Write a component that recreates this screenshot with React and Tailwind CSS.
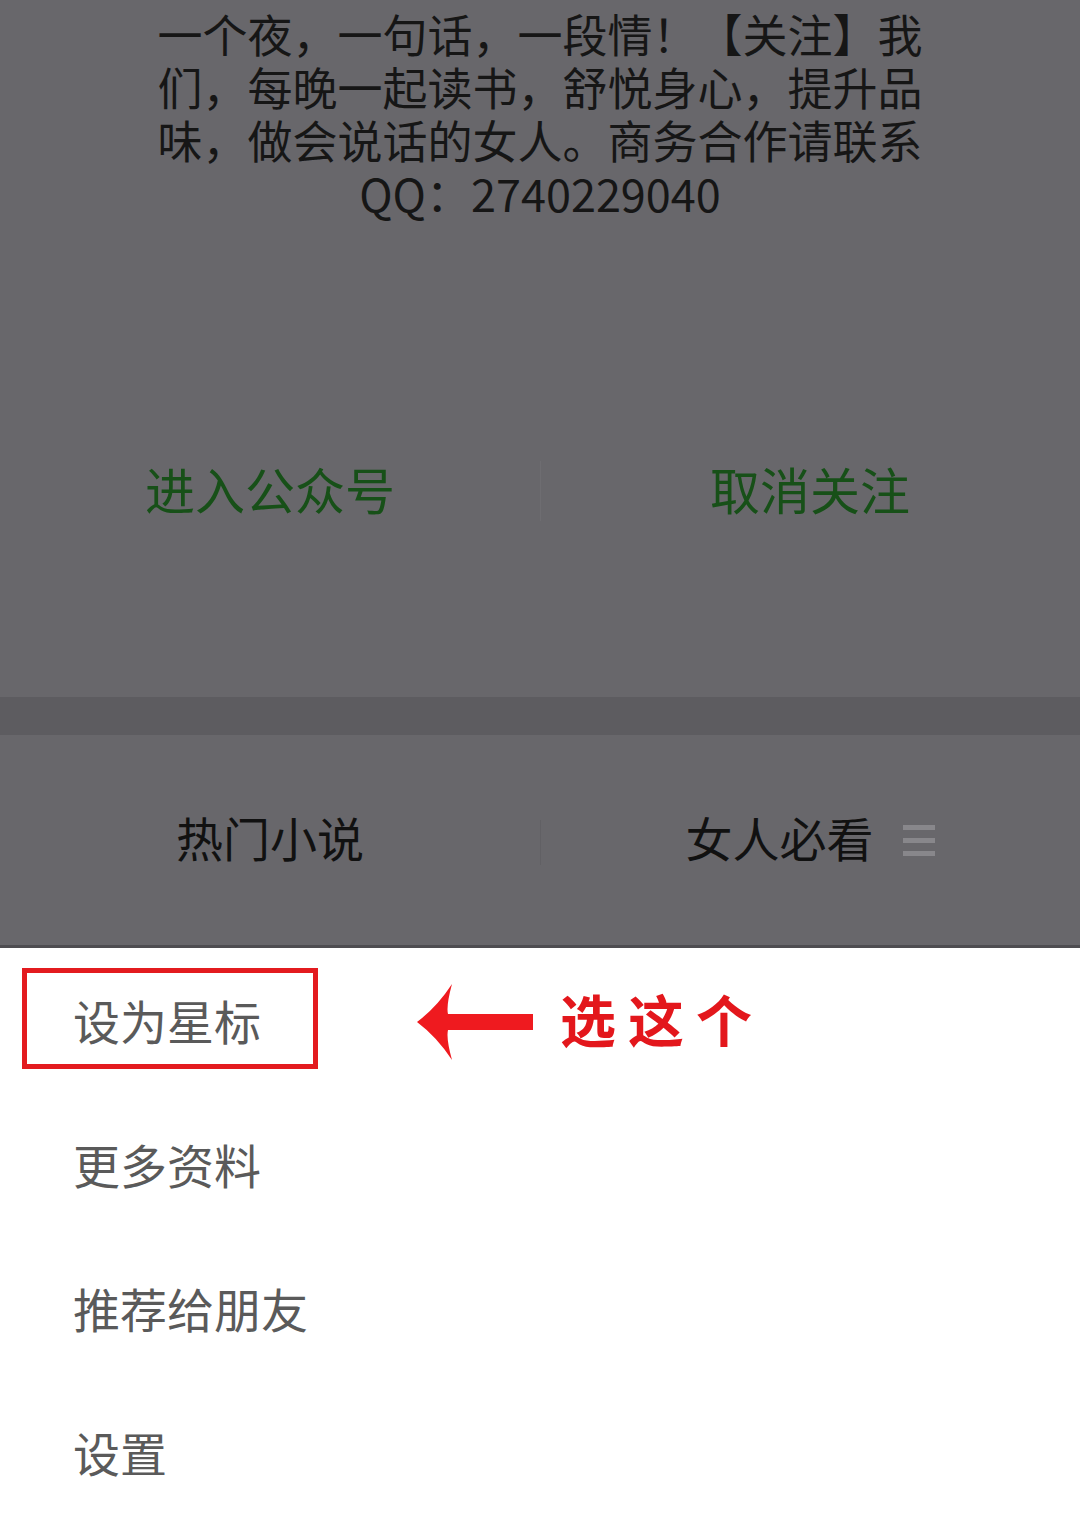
import React from 'react';

const cjk = { fontFamily: '"Noto Sans CJK SC", "Noto Sans", sans-serif' };

const introLines = [
    '一个夜，一句话，一段情！【关注】我',
    '们，每晚一起读书，舒悦身心，提升品',
    '味，做会说话的女人。商务合作请联系',
    'QQ：2740229040',
];

const menuItems = ['更多资料', '推荐给朋友', '设置'];

export default function App() {
    return (
        <div className="w-[1080px] h-[1527px] overflow-hidden bg-white" style={cjk}>
            {/* Dimmed profile card */}
            <div className="h-[697px] bg-[#68676b] flex flex-col">
                <div className="w-[770px] mx-auto pt-[7px] text-[45px] leading-[53px] text-[#161616] text-center">
                    {introLines.map(line => (
                        <p key={line} className="whitespace-nowrap">{line}</p>
                    ))}
                </div>
                <div className="mt-[222px] grid grid-cols-2 h-[100px] items-center relative">
                    <div className="text-center text-[50px] leading-[60px] -mt-[6px] text-[#175018]">进入公众号</div>
                    <div className="text-center text-[50px] leading-[60px] -mt-[6px] text-[#175018]">取消关注</div>
                    <div className="absolute left-[540px] top-[20px] w-px h-[60px] bg-[#6e6d71]" />
                </div>
            </div>
            <div className="h-[38px] bg-[#5d5c60]" />

            {/* Menu bar */}
            <div className="h-[210px] bg-[#68676b] grid grid-cols-2 items-center relative">
                <div className="text-center text-[47px] leading-[60px] -mt-[6px] text-[#111]">热门小说</div>
                <div className="flex items-center justify-center gap-[29px]">
                    <span className="text-[47px] leading-[60px] -mt-[6px] text-[#111]">女人必看</span>
                    <div className="flex flex-col gap-[8px] w-[32px]">
                        <div className="h-[5px] bg-[#88878b]" />
                        <div className="h-[5px] bg-[#88878b]" />
                        <div className="h-[5px] bg-[#88878b]" />
                    </div>
                </div>
                <div className="absolute left-[540px] top-[85px] w-px h-[45px] bg-[#616064]" />
            </div>
            <div className="h-[3px] bg-[#4e4d51]" />

            {/* Bottom sheet */}
            <div className="pt-[3px] flex flex-col">
                <div className="h-[144px] relative flex items-center pl-[73px]">
                    <span className="text-[47px] leading-[60px] -mt-[6px] text-[#5a5a5a]">设为星标</span>
                    <div className="absolute left-[22px] top-[17px] w-[296px] h-[101px] border-[5px] border-[#e31b1f]" />
                    <svg className="absolute left-[415px] top-[30px]" width="120" height="84" viewBox="0 0 120 84">
                        <path d="M2 41 Q22 26 37 3 Q31 25 33 33 L118 33 L118 49 L33 49 Q31 57 37 79 Q22 56 2 41 Z" fill="#ef1a1f" />
                    </svg>
                    <span className="absolute left-[560px] top-[32px] text-[56px] leading-[70px] font-bold tracking-[12px] text-[#e3171c]">选这个</span>
                </div>
                {menuItems.map(item => (
                    <div key={item} className="h-[144px] flex items-center pl-[73px]">
                        <span className="text-[47px] leading-[60px] -mt-[6px] text-[#5a5a5a]">{item}</span>
                    </div>
                ))}
            </div>
        </div>
    );
}
